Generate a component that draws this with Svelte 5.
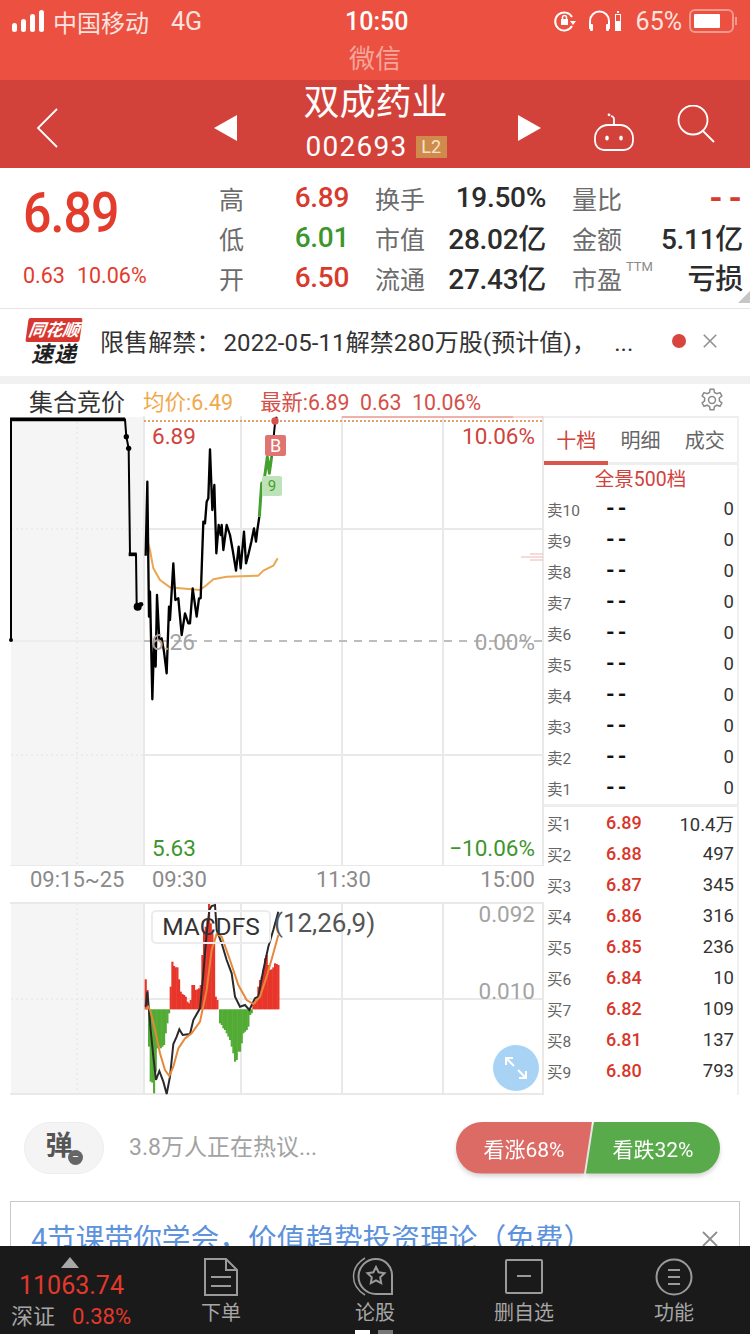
<script>
  const line1 = [[437,437],[442,215],[447,620],[450,545],[457,868],[462,700],[467,770],[471,555],[478,690],[485,685],[492,725],[500,790],[507,590],[510,630],[520,460],[526,570],[535,565],[545,675],[555,610],[565,640],[570,640],[578,535],[590,620],[597,565],[602,565],[610,335],[615,340],[620,275],[625,265],[630,118],[637,300],[643,225],[649,430],[656,345],[662,375],[665,345],[670,420],[680,345],[690,375],[698,420],[708,482],[716,410],[722,475],[732,365],[738,460],[746,430],[754,395],[762,355],[768,395],[772,360],[778,320]];
  const green = [[778,320],[785,220],[792,215],[802,140],[808,190],[815,140]];
  const tail = [[815,140],[825,40],[830,20]];
  const avg = [[440,385],[450,420],[460,475],[480,510],[510,532],[540,535],[600,540],[620,525],[640,508],[680,500],[775,497],[790,482],[820,467],[833,445]];
  const auction = [[33,690],[33,28],[375,28],[379,80],[386,115],[390,433],[408,433],[410,582],[415,595],[425,580]];
  const pts = (a) => a.map((p) => p.join(',')).join(' ');
  const macdBlack = [[437,350],[442,305],[447,360],[452,420],[460,500],[468,570],[478,543],[490,575],[500,612],[510,560],[520,462],[530,440],[538,418],[548,435],[570,432],[580,390],[600,355],[610,250],[620,130],[628,60],[635,48],[645,45],[650,120],[665,160],[680,210],[695,250],[705,320],[720,350],[735,345],[748,360],[765,325],[775,320],[790,240],[805,170],[820,120],[835,65]];
  const macdOrange = [[437,358],[445,350],[452,365],[465,420],[480,490],[495,540],[508,558],[520,530],[535,475],[555,445],[575,430],[600,395],[620,300],[635,180],[650,132],[665,140],[690,210],[715,285],[740,330],[760,342],[780,320],[800,260],[820,190],[835,135]];
  const bars = [[437,268],[442,300],[447,470],[452,575],[457,578],[462,610],[467,545],[472,475],[477,470],[482,475],[487,470],[492,465],[497,430],[502,400],[507,370],[512,290],[517,215],[522,228],[527,232],[532,232],[537,268],[542,305],[547,312],[552,315],[557,320],[562,335],[567,340],[572,330],[577,285],[582,285],[587,300],[592,298],[597,295],[602,285],[607,195],[612,125],[617,110],[622,85],[627,42],[632,100],[637,130],[642,160],[647,320],[652,330],[660,400],[665,405],[670,415],[675,420],[680,430],[685,440],[690,450],[695,470],[700,490],[705,515],[710,510],[715,485],[720,485],[725,460],[730,430],[735,425],[740,420],[745,410],[750,375],[755,370],[760,345],[765,340],[770,330],[775,290],[780,270],[785,260],[790,240],[795,205],[800,195],[805,225],[810,240],[815,238],[820,232],[825,220],[830,222],[835,225]];
  const base = 358;
  const quotes = [
    [['高','6.89','up'],['换手','19.50%',''],['量比','--','up dash-val']],
    [['低','6.01','down'],['市值','28.02亿',''],['金额','5.11亿','']],
    [['开','6.50','up'],['流通','27.43亿',''],['市盈','亏损','']]
  ];
  const sells = ['卖10','卖9','卖8','卖7','卖6','卖5','卖4','卖3','卖2','卖1'];
  const buys = [['买1','6.89','10.4万'],['买2','6.88','497'],['买3','6.87','345'],['买4','6.86','316'],['买5','6.85','236'],['买6','6.84','10'],['买7','6.82','109'],['买8','6.81','137'],['买9','6.80','793']];
</script>

<div class="page">
  <header class="top">
    <div class="status">
      <div class="st-left">
        <svg class="signal" width="34" height="24" viewBox="0 0 34 24" fill="#fff"><rect x="0" y="14" width="5" height="9" rx="2.500"/><rect x="9" y="10" width="5" height="13" rx="2.500"/><rect x="18" y="5" width="5" height="18" rx="2.500"/><rect x="27" y="1" width="5" height="22" rx="2.500"/></svg>
        <span class="carrier">中国移动</span>
        <span class="net">4G</span>
      </div>
      <div class="st-time">10:50</div>
      <div class="st-right">
        <svg class="i-lock" width="24" height="24" viewBox="0 0 24 24" fill="none" stroke="#fff" stroke-width="2"><path d="M19 8A9 9 0 1 0 19 17"/><path d="M17 12h6l-3 4z" fill="#fff" stroke="none"/><rect x="8" y="10" width="7" height="6" fill="#fff" stroke="none"/><path d="M9.500 10V8.500a2 2 0 0 1 4 0V10" stroke-width="1.500"/></svg>
        <svg class="i-head" width="24" height="22" viewBox="0 0 24 22" fill="none" stroke="#fff" stroke-width="2"><path d="M2 19V11a9.500 9.500 0 0 1 19 0v8"/><rect x="2" y="14" width="3" height="7" fill="#fff" stroke="none" rx="1"/><rect x="18" y="14" width="3" height="7" fill="#fff" stroke="none" rx="1"/></svg>
        <svg class="minibat" width="6" height="22" viewBox="0 0 6 22"><rect x=".5" y="4.500" width="5" height="16" fill="none" stroke="#fff"/><rect x="1" y="11" width="4" height="9" fill="#fff"/><rect x="2" y="1" width="2" height="2" fill="#fff"/></svg>
        <span class="pct">65%</span>
        <div class="battery"><i></i></div><b class="nub"></b>
      </div>
    </div>
    <div class="wechat">微信</div>
  </header>

  <nav class="nav">
    <svg class="back" width="24" height="40" viewBox="0 0 24 40" fill="none" stroke="#fff" stroke-width="1.800"><path d="M21 1L2 20l19 19"/></svg>
    <svg class="arrow-l" width="24" height="26" viewBox="0 0 24 26"><path d="M23 0v26L0 13z" fill="#fff"/></svg>
    <div class="title">
      <div class="name">双成药业</div>
      <div class="code"><span>002693</span><em>L2</em></div>
    </div>
    <svg class="arrow-r" width="24" height="26" viewBox="0 0 24 26"><path d="M1 0v26L24 13z" fill="#fff"/></svg>
    <svg class="robot" width="42" height="38" viewBox="0 0 42 38" fill="none" stroke="#fff" stroke-width="1.800"><path d="M11 37h20a9 9 0 0 0 9-9v-3a13 13 0 0 0-13-13H15A13 13 0 0 0 2 25v3a9 9 0 0 0 9 9z"/><path d="M21 12V6c0-2-1-2.500-3-3"/><circle cx="16" cy="1.800" r="1.400" fill="#fff" stroke="none"/><ellipse cx="14" cy="25" rx="1.800" ry="2.500" fill="#fff" stroke="none"/><ellipse cx="28" cy="25" rx="1.800" ry="2.500" fill="#fff" stroke="none"/></svg>
    <svg class="search" width="38" height="38" viewBox="0 0 38 38" fill="none" stroke="#fff" stroke-width="1.800"><circle cx="16" cy="15" r="14.500"/><path d="M26 26l11 11"/></svg>
  </nav>

  <section class="quote">
    <div class="q-main">
      <div class="big">6.89</div>
      <div class="delta"><span>0.63</span><span>10.06%</span></div>
    </div>
    <div class="q-grid">
      {#each quotes as row}
        {#each row as c}
          <div class="q-cell">
            <span class="q-label">{c[0]}{#if c[0] === '市盈'}<sup>TTM</sup>{/if}</span>
            <span class="q-val {c[2]}">{c[1]}</span>
          </div>
        {/each}
      {/each}
    </div>
    <i class="corner"></i>
  </section>

  <section class="notice">
    <div class="logo"><span class="logo-a">同花顺</span><span class="logo-b">速递</span></div>
    <div class="n-text"><span class="n-lead">限售解禁：</span>2022-05-11解禁280万股(预计值)，&nbsp;&nbsp;&nbsp;...</div>
    <i class="dot"></i>
    <svg class="close" width="16" height="16" viewBox="0 0 18 18" stroke="#8f8f8f" stroke-width="1.800"><path d="M2 2l14 14M16 2L2 16"/></svg>
  </section>

  <section class="chart-head">
    <span class="auction">集合竞价</span>
    <span class="avg">均价:6.49</span>
    <span class="latest">最新:6.89&nbsp;&nbsp;0.63&nbsp;&nbsp;10.06%</span>
    <svg class="gear" width="26" height="26" viewBox="0 0 24 24" fill="none" stroke="#8a8a8a" stroke-width="1.400"><circle cx="12" cy="12" r="3.200"/><path d="M10.300 2h3.400l.6 3 2.200 1.200 2.900-1 1.700 3-2.300 2v2.600l2.300 2-1.700 3-2.900-1-2.200 1.200-.6 3h-3.400l-.6-3-2.200-1.200-2.900 1-1.700-3 2.300-2v-2.600l-2.300-2 1.700-3 2.900 1 2.200-1.200z"/></svg>
  </section>

  <section class="market">
    <div class="charts">
      <div class="price">
        <svg class="plot" width="544" height="450" viewBox="0 0 544 450">
          <rect x="11" y="1" width="133" height="449" fill="#f5f5f5"/>
          <g stroke="#e9e9e9" stroke-width="2" fill="none">
            <path d="M144 0V450M241 0V450M342 0V450M443 0V450M543 0V450"/>
            <path d="M144 113H543M144 339H543M10 450H543"/>
          </g>
          <path d="M11 113H144M11 339H144M77 1V450" stroke="#e4e4e4" stroke-dasharray="2 3" fill="none"/>
          <path d="M11 225H144" stroke="#e6e6e6" fill="none"/>
          <path d="M144 225H543" stroke="#bdbdbd" stroke-width="2" stroke-dasharray="8 7" fill="none"/>
          <path d="M144 5H543" stroke="#e3a16a" stroke-width="2" stroke-dasharray="2 2" fill="none"/>
          <path d="M342 1H513" stroke="#eeb1ac" stroke-width="2" fill="none"/>
          <path d="M513 1H543" stroke="#eeb1ac" fill="none"/>
          <path d="M521 141H543M530 138H543M530 144H543" stroke="#f0b4b0" fill="none"/>
          <g transform="translate(0,-6) scale(.33333)" fill="none" stroke-linejoin="round">
            <polyline points={pts(auction)} stroke="#000" stroke-width="6"/>
            <path d="M30 28H375" stroke="#000" stroke-width="11"/>
            <circle cx="33" cy="690" r="6" fill="#000"/>
            <circle cx="379" cy="80" r="8" fill="#000"/>
            <circle cx="386" cy="115" r="8" fill="#000"/>
            <path d="M386 433H410" stroke="#000" stroke-width="11"/>
            <circle cx="413" cy="590" r="12" fill="#000"/>
            <circle cx="423" cy="583" r="7" fill="#000"/>
            <polyline points={pts(avg)} stroke="#eba650" stroke-width="6"/>
            <polyline points={pts(line1)} stroke="#000" stroke-width="7"/>
            <polyline points={pts(green)} stroke="#46a02f" stroke-width="9"/>
            <polyline points={pts(tail)} stroke="#000" stroke-width="6"/>
            <circle cx="825" cy="33" r="11" fill="#d9504c"/>
          </g>
        </svg>
        <span class="tag tag-b">B</span>
        <span class="tag tag-9">9</span>
        <span class="lab hi">6.89</span>
        <span class="lab mid">6.26</span>
        <span class="lab lo">5.63</span>
        <span class="lab r-hi">10.06%</span>
        <span class="lab r-mid">0.00%</span>
        <span class="lab r-lo">−10.06%</span>
      </div>
      <div class="times">
        <span class="t1">09:15~25</span>
        <span class="t2">09:30</span>
        <span class="t3">11:30</span>
        <span class="t4">15:00</span>
      </div>
      <div class="macd">
        <svg class="plot" width="544" height="193" viewBox="0 0 544 193">
          <rect x="11" y="1" width="133" height="191" fill="#f5f5f5"/>
          <g stroke="#e9e9e9" stroke-width="2" fill="none">
            <path d="M144 0V193M241 0V193M342 0V193M443 0V193M543 0V193"/>
            <path d="M144 97H543M10 192H543M10 1H543"/>
          </g>
          <path d="M11 97H144M77 1V192" stroke="#e4e4e4" stroke-dasharray="2 3" fill="none"/>
          <g transform="translate(0,-12) scale(.33333)" fill="none">
            {#each bars as b}
              <rect x={b[0] - 3} y={Math.min(b[1], base)} width="6.500" height={Math.abs(b[1] - base)} fill={b[1] < base ? '#e8352a' : '#52ab34'}/>
            {/each}
            <polyline points={pts(macdBlack)} stroke="#2a2a2a" stroke-width="6"/>
            <polyline points={pts(macdOrange)} stroke="#e5883a" stroke-width="6"/>
          </g>
        </svg>
        <span class="macd-name">MACDFS</span>
        <span class="macd-par">(12,26,9)</span>
        <span class="lab m-hi">0.092</span>
        <span class="lab m-mid">0.010</span>
        <span class="fs">
          <svg width="26" height="26" viewBox="0 0 26 26" fill="none" stroke="#fff" stroke-width="2"><path d="M3 10V3h7M3 3l8 8M23 16v7h-7M23 23l-8-8"/></svg>
        </span>
      </div>
    </div>

    <aside class="book">
      <div class="tabs">
        <span class="tab on">十档</span><span class="tab">明细</span><span class="tab">成交</span>
      </div>
      <div class="full">全景500档</div>
      <div class="sells">
        {#each sells as s}
          <div class="row"><span class="r-name">{s}</span><span class="r-price dash">--</span><span class="r-vol">0</span></div>
        {/each}
      </div>
      <div class="buys">
        {#each buys as b}
          <div class="row"><span class="r-name">{b[0]}</span><span class="r-price">{b[1]}</span><span class="r-vol">{b[2]}</span></div>
        {/each}
      </div>
    </aside>
  </section>

  <section class="talk">
    <div class="danmu">弹<i>−</i></div>
    <div class="hot">3.8万人正在热议...</div>
    <div class="vote">
      <span class="bull">看涨68%</span><span class="bear">看跌32%</span>
    </div>
  </section>

  <section class="ad">
    <div class="ad-box">
      <span class="ad-text">4节课带你学会，价值趋势投资理论（免费）</span>
      <svg class="ad-x" width="18" height="18" viewBox="0 0 18 18" stroke="#8f8f8f" stroke-width="1.800"><path d="M2 2l14 14M16 2L2 16"/></svg>
    </div>
  </section>

  <footer class="bar">
    <div class="index">
      <i class="up-tri"></i>
      <div class="idx-num">11063.74</div>
      <div class="idx-sub"><span>深证</span><b>0.38%</b></div>
    </div>
    <div class="b-item i1">
      <svg width="36" height="38" viewBox="0 0 36 38" fill="none" stroke="#9a9a9a" stroke-width="2"><path d="M2 1h21l11 11v25H2z"/><path d="M23 1v11h11M8 19h20M8 28h20"/></svg>
      <span>下单</span>
    </div>
    <div class="b-item i2">
      <svg class="i-talk" width="42" height="40" viewBox="0 0 42 40" fill="none" stroke="#9a9a9a" stroke-width="2"><path d="M24 2a16 16 0 0 1 16 16v19H24A17.500 17.500 0 0 1 24 2z"/><path d="M13 1C5 6 1.500 13 1.500 19.500S5 33 13 38" stroke-width="1.500"/><path d="M24 10l2.600 5.300 5.900.9-4.300 4.100 1 5.800-5.200-2.700-5.200 2.700 1-5.800-4.300-4.100 5.900-.9z"/></svg>
      <span>论股</span>
    </div>
    <div class="b-item i3">
      <svg width="40" height="36" viewBox="0 0 40 36" fill="none" stroke="#9a9a9a" stroke-width="2"><rect x="2" y="1" width="36" height="33" rx="1"/><path d="M13 17h14"/></svg>
      <span>删自选</span>
    </div>
    <div class="b-item i4">
      <svg width="38" height="38" viewBox="0 0 38 38" fill="none" stroke="#9a9a9a" stroke-width="2"><circle cx="19" cy="19" r="17.500"/><path d="M13 12h12M13 19h12M13 26h12"/></svg>
      <span>功能</span>
    </div>
    <div class="pager"><i class="p-on"></i><i></i></div>
  </footer>
</div>

<style>
  :global(body) { margin: 0; background: #fff; }
  .page {
    width: 750px; height: 1334px; overflow: hidden; display: flex; flex-direction: column;
    font-family: "Roboto", "Noto Sans CJK SC", sans-serif; color: #2c2c2c; background: #fff;
  }
  .top { background: #ec5040; height: 80px; flex: none; color: #fff; }
  .status { height: 42px; display: flex; align-items: center; padding: 0 13px 0 12px; }
  .st-left { display: flex; align-items: center; width: 333px; flex: none; }
  .carrier { font-size: 24px; margin-left: 7px; color: #fbe3df; }
  .net { font-size: 25px; margin-left: 22px; color: #fbe3df; }
  .st-time { font-size: 25px; font-weight: 500; flex: none; width: 66px; }
  .st-right { display: flex; align-items: center; flex: 1; justify-content: flex-end; color: #fbe3df; }
  .i-lock { margin-right: 11px; }
  .i-head { margin-right: 3px; }
  .minibat { margin-right: 15px; }
  .pct { font-size: 25px; margin-right: 7px; }
  .battery { width: 35px; height: 14px; border: 2px solid #f39a8e; border-radius: 6px; padding: 3px; box-sizing: content-box; display: flex; }
  .battery i { width: 26px; height: 14px; background: #fff; border-radius: 1px; }
  .nub { width: 2px; height: 8px; background: #f39a8e; margin-left: 1px; }
  .wechat { height: 38px; text-align: center; font-size: 26px; line-height: 34px; color: #f5a69c; }

  .nav { height: 88px; flex: none; background: #d2423a; position: relative; color: #fff; display: flex; align-items: center; }
  .back { margin: 8px 0 0 36px; }
  .arrow-l { margin: 8px 0 0 154px; }
  .title { width: 275px; text-align: center; flex: none; }
  .name { font-size: 36px; line-height: 44px; margin-top: -4px; }
  .code { display: flex; align-items: center; justify-content: center; margin-top: 5px; margin-left: 1px; }
  .code span { font-size: 28px; letter-spacing: 1.300px; line-height: 34px; }
  .code em { font-style: normal; font-size: 18px; line-height: 22px; width: 31px; text-align: center; background: #cf8b4b; margin-left: 8px; color: #f7e3c8; }
  .arrow-r { margin: 8px 0 0 4px; }
  .robot { margin: 16px 0 0 52px; }
  .search { margin: 0 0 0 42px; }

  .quote { height: 140px; flex: none; display: flex; position: relative; border-bottom: 1px solid #e6e6e6; box-sizing: content-box; }
  .q-main { width: 219px; flex: none; padding-left: 23px; box-sizing: border-box; }
  .big { font-size: 55px; font-weight: 500; line-height: 60px; color: #e33b2c; margin-top: 15px; letter-spacing: -1px; transform: scaleX(.91); transform-origin: left center; }
  .delta { display: flex; gap: 12px; margin-top: 19px; font-size: 21.500px; line-height: 28px; color: #e33b2c; }
  .q-grid { display: grid; grid-template-columns: 130px 171px 171px; column-gap: 26px; grid-auto-rows: 40px; padding-top: 9px; }
  .q-cell { display: flex; justify-content: space-between; align-items: center; }
  .q-label { font-size: 25px; color: #6c6c6c; position: relative; top: 1px; }
  .q-label sup { position: absolute; left: 54px; top: -1px; font-size: 13px; line-height: 16px; color: #8a8a8a; }
  .q-val { font-size: 28px; font-weight: 500; color: #2c2c2c; letter-spacing: -.3px; }
  .q-val.up { color: #d83a2e; }
  .q-val.down { color: #3d962c; }
  .q-val.dash-val { font-size: 34px; line-height: 28px; font-weight: 700; letter-spacing: 6px; margin-right: -5px; }
  .corner { position: absolute; right: 0; bottom: 5px; width: 0; height: 0; border-left: 12px solid transparent; border-bottom: 12px solid #c6c6c6; }

  .notice { height: 67px; flex: none; display: flex; align-items: center; position: relative; }
  .logo { margin-left: 24px; width: 60px; display: flex; flex-direction: column; align-items: center; font-style: italic; font-weight: 700; }
  .logo-a { background: #d8372f; color: #fff; font-size: 17px; line-height: 24px; width: 54px; text-align: center; transform: skewX(-8deg); border-radius: 2px; white-space: nowrap; }
  .logo-b { font-size: 22px; line-height: 25px; color: #1f1f1f; letter-spacing: 1px; }
  .n-text { font-size: 24px; margin: -4px 0 0 16px; color: #333; white-space: nowrap; flex: 1; width: 0; letter-spacing: .1px; }
  .n-lead { margin-right: 3px; }
  .dot { width: 14px; height: 14px; background: #d8453f; border-radius: 50%; margin: -4px 16px 0 0; }
  .close { margin: -4px 32px 0 0; }

  .chart-head { margin-top: 8px; height: 32px; flex: none; display: flex; align-items: center; position: relative; box-shadow: 0 -8px 0 #f1f1f1; }
  .auction { font-size: 24px; margin-left: 29px; color: #333; }
  .avg { font-size: 21.500px; color: #efa94c; margin-left: 18px; }
  .latest { font-size: 21.300px; color: #d45049; margin-left: 27px; }
  .gear { margin-left: auto; margin-right: 25px; }

  .market { display: flex; flex: none; height: 679px; }
  .charts { width: 544px; flex: none; display: flex; flex-direction: column; }
  .price { height: 450px; position: relative; flex: none; }
  .plot { display: block; }
  .lab { position: absolute; font-size: 22.500px; line-height: 28px; }
  .hi { left: 152px; top: 6px; color: #d0433c; }
  .mid { left: 151px; top: 212px; color: #a3a3a3; }
  .lo { left: 152px; top: 418px; color: #3d962c; }
  .r-hi { right: 9px; top: 6px; color: #d0433c; }
  .r-mid { right: 9px; top: 212px; color: #a3a3a3; }
  .r-lo { right: 9px; top: 418px; color: #3d962c; }
  .tag { position: absolute; text-align: center; border-radius: 2px; }
  .tag-b { left: 265px; top: 19px; width: 21px; height: 21px; background: #e07470; color: #fff; font-size: 18px; line-height: 21px; }
  .tag-9 { left: 262px; top: 60px; width: 20px; height: 20px; background: #bfe3b8; color: #46a02f; font-size: 15px; line-height: 20px; }
  .times { height: 36px; flex: none; position: relative; font-size: 22px; color: #8a8a8a; }
  .times span { position: absolute; top: 0; line-height: 28px; }
  .t1 { left: 30px; }
  .t2 { left: 152px; }
  .t3 { left: 316px; }
  .t4 { right: 9px; }
  .macd { height: 193px; position: relative; flex: none; }
  .macd-name { position: absolute; left: 151px; top: 8px; width: 116px; height: 30px; line-height: 30px; text-align: center; font-size: 24.500px; color: #333; border: 2px solid #ececec; border-radius: 5px; box-sizing: content-box; }
  .macd-par { position: absolute; left: 274px; top: 6px; font-size: 26px; line-height: 30px; color: #555; }
  .m-hi { right: 9px; top: -2px; color: #a3a3a3; }
  .m-mid { right: 9px; top: 75px; color: #a3a3a3; }
  .fs { position: absolute; left: 493px; top: 143px; width: 46px; height: 46px; border-radius: 50%; background: #a9d3f5; display: flex; align-items: center; justify-content: center; }

  .book { width: 195px; flex: none; border-top: 2px solid #eee; border-right: 2px solid #f0f0f0; box-sizing: border-box; }
  .tabs { display: flex; height: 47px; border-bottom: 3px solid #eee; box-sizing: border-box; }
  .tab { flex: 1; text-align: center; font-size: 20px; line-height: 46px; color: #666; }
  .tab.on { color: #d0433c; border-bottom: 4px solid #d9564c; height: 47px; box-sizing: border-box; }
  .full { text-align: center; font-size: 19.500px; color: #d0433c; line-height: 27px; height: 27px; margin-top: 1px; }
  .sells { border-bottom: 3px solid #eee; padding-bottom: 1px; }
  .row { display: flex; align-items: center; height: 31px; }
  .r-name { width: 62px; padding-left: 3px; box-sizing: border-box; font-size: 15.500px; color: #666; flex: none; }
  .r-price { width: 50px; font-size: 18px; font-weight: 500; color: #d8362a; flex: none; }
  .r-price.dash { color: #111; letter-spacing: 3px; font-weight: 700; font-size: 22px; }
  .r-vol { flex: 1; text-align: right; padding-right: 3px; font-size: 18.500px; color: #333; }

  .talk { height: 105px; flex: none; display: flex; align-items: center; }
  .danmu { width: 80px; height: 52px; margin-left: 24px; border-radius: 26px; background: #f4f4f4; border: 1px solid #eee; box-sizing: border-box; font-size: 27px; font-weight: 700; color: #555; text-align: center; line-height: 46px; position: relative; padding-right: 10px; }
  .danmu i { position: absolute; left: 43px; top: 27px; width: 15px; height: 15px; border-radius: 50%; background: #666; color: #fff; font-size: 12px; line-height: 15px; font-style: normal; font-weight: 400; text-align: center; }
  .hot { font-size: 23px; color: #a2a2a2; margin: -5px 0 0 25px; flex: 1; }
  .vote { display: flex; width: 264px; height: 52px; margin-right: 30px; filter: drop-shadow(0 3px 2px rgba(120, 120, 120, .3)); }
  .bull, .bear { display: flex; align-items: center; justify-content: center; color: #fff; font-size: 21px; height: 52px; flex: none; }
  .bull { width: 136px; background: #dc6b66; border-radius: 26px 0 0 26px; clip-path: polygon(0 0, 100% 0, 128px 100%, 0 100%); }
  .bear { width: 134px; margin-left: -6px; background: #58aa4a; border-radius: 0 26px 26px 0; clip-path: polygon(8px 0, 100% 0, 100% 100%, 0 100%); }

  .ad { flex: 1; min-height: 0; overflow: hidden; padding: 1px 10px 0; }
  .ad-box { border: 1px solid #c9c9c9; border-bottom: 0; height: 80px; position: relative; box-sizing: border-box; }
  .ad-text { position: absolute; left: 20px; top: 18px; font-size: 28.700px; line-height: 38px; color: #5d92dd; white-space: nowrap; }
  .ad-x { position: absolute; right: 20px; top: 28px; }

  .bar { height: 88px; flex: none; background: #1a1a1a; display: flex; position: relative; color: #a6a6a6; }
  .index { width: 142px; flex: none; position: relative; }
  .up-tri { position: absolute; left: 61px; top: 11px; width: 0; height: 0; border-left: 9px solid transparent; border-right: 9px solid transparent; border-bottom: 11px solid #a8a8a8; }
  .idx-num { position: absolute; left: 19px; top: 24px; font-size: 25px; line-height: 32px; color: #e3392b; }
  .idx-sub { position: absolute; left: 11px; top: 56px; display: flex; align-items: center; font-size: 22px; line-height: 30px; }
  .idx-sub b { font-weight: 400; color: #e3392b; margin-left: 17px; font-size: 22px; }
  .b-item { position: absolute; top: 11px; display: flex; flex-direction: column; align-items: center; width: 100px; font-size: 20px; line-height: 26px; }
  .b-item svg { height: 40px; margin-bottom: 3px; }
  .b-item .i-talk { margin-left: -4px; }
  .i1 { left: 171px; }
  .i2 { left: 325px; }
  .i3 { left: 474px; }
  .i4 { left: 624px; }
  .pager { position: absolute; left: 355px; bottom: 0; display: flex; gap: 8px; }
  .pager i { width: 15px; height: 4px; background: #777; }
  .pager .p-on { background: #fff; }
</style>
